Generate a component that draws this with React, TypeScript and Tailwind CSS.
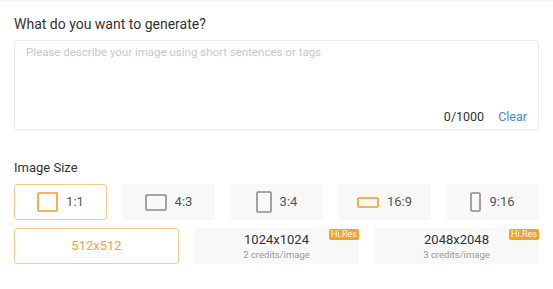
import { useState } from 'react';

type Ratio = {
  label: string;
  w: number;
  h: number;
  accent?: boolean;
};

const ratios: Ratio[] = [
  { label: '1:1', w: 21, h: 20 },
  { label: '4:3', w: 22, h: 17 },
  { label: '3:4', w: 16, h: 22 },
  { label: '16:9', w: 22, h: 11, accent: true },
  { label: '9:16', w: 11, h: 20 },
];

const resolutions = [
  { label: '512x512' },
  { label: '1024x1024', credits: '2 credits/image', hires: true },
  { label: '2048x2048', credits: '3 credits/image', hires: true },
];

// Outline rectangle used as the aspect ratio glyph
function RatioIcon({ w, h, active }: { w: number; h: number; active: boolean }) {
  return (
    <svg width={w} height={h} viewBox={`0 0 ${w} ${h}`} className="shrink-0">
      <rect
        x={1}
        y={1}
        width={w - 2}
        height={h - 2}
        rx={1}
        fill="none"
        stroke={active ? '#f39a26' : '#8a8a8a'}
        strokeWidth={1.6}
      />
    </svg>
  );
}

export default function App() {
  const [prompt, setPrompt] = useState('');
  const [ratio, setRatio] = useState('1:1');
  const [size, setSize] = useState('512x512');

  return (
    <div className="w-[553px] min-h-[289px] bg-white border-t border-[#f1f1f1] px-[14px] pt-[13px] font-['Roboto',sans-serif]">
      <p className="text-[14px] leading-5 text-[#333]">What do you want to generate?</p>

      {/* Prompt box */}
      <div className="relative mt-[6px] h-[90px] rounded-[3px] border border-[#ececec] shadow-[0_1px_1px_rgba(0,0,0,0.03)]">
        <textarea
          value={prompt}
          onChange={e => setPrompt(e.target.value.slice(0, 1000))}
          placeholder="Please describe your image using short sentences or tags"
          className="w-full h-[62px] resize-none outline-none bg-transparent px-[11px] pt-[3px] text-[11.5px] leading-4 text-[#333] placeholder:text-[#c8c8c8]"
        />
        <div className="absolute right-[11px] bottom-[2px] flex items-center gap-[14px] text-[12.5px] leading-5">
          <span className="text-[#333]">{prompt.length}/1000</span>
          <button onClick={() => setPrompt('')} className="text-[#3d8be8]">
            Clear
          </button>
        </div>
      </div>

      <p className="mt-[28px] text-[13px] leading-5 text-[#333]">Image Size</p>

      {/* Aspect ratios */}
      <div className="mt-[6px] grid grid-cols-5 gap-[15px]">
        {ratios.map(r => {
          const selected = ratio === r.label;
          return (
            <button
              key={r.label}
              onClick={() => setRatio(r.label)}
              className={`h-[36px] flex items-center justify-center gap-[8px] rounded-[3px] border text-[13px] text-[#555] ${
                selected ? 'bg-white border-[#f6c98c]' : 'bg-[#f8f8f8] border-transparent'
              }`}
            >
              <RatioIcon w={r.w} h={r.h} active={selected || !!r.accent} />
              <span>{r.label}</span>
            </button>
          );
        })}
      </div>

      {/* Resolutions */}
      <div className="mt-[8px] grid grid-cols-3 gap-[15px]">
        {resolutions.map(r => {
          const selected = size === r.label;
          return (
            <button
              key={r.label}
              onClick={() => setSize(r.label)}
              className={`relative h-[36px] flex flex-col items-center justify-center rounded-[3px] border ${
                selected ? 'bg-white border-[#f6c98c]' : 'bg-[#f8f8f8] border-transparent'
              }`}
            >
              <span className={`text-[13px] leading-4 ${selected ? 'text-[#f2a34a]' : 'text-[#333]'}`}>{r.label}</span>
              {r.credits && <span className="text-[9.5px] leading-3 mt-[1px] text-[#999]">{r.credits}</span>}
              {r.hires && (
                <span className="absolute top-0 right-[-1px] h-[11px] px-[2px] rounded-[2px] bg-[#f5a02a] text-white text-[9px] leading-[11px]">
                  Hi.Res
                </span>
              )}
            </button>
          );
        })}
      </div>
    </div>
  );
}
